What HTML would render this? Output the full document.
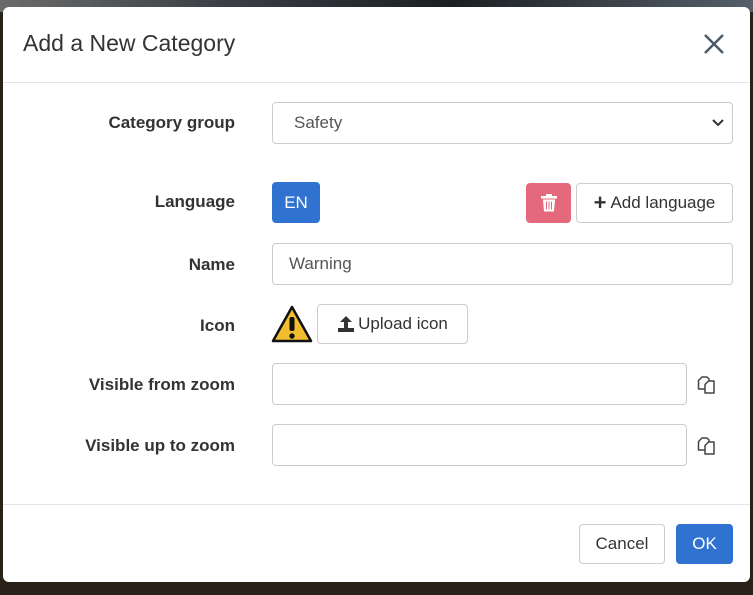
<!DOCTYPE html><html><head><style>
body{margin:0;width:753px;height:595px;background:#2a2118;position:relative;overflow:hidden;font-family:"Liberation Sans",sans-serif;}
.bg{position:absolute;left:0;top:0;width:753px;height:12px;background:linear-gradient(90deg,#6b6b6b,#3a3f44 30%,#1b1f22 60%,#56606a)}
.dlg{position:absolute;left:3px;top:7px;width:747px;height:575px;background:#fff;border-radius:6px}
.a{position:absolute;box-sizing:border-box}
.lbl{position:absolute;right:518px;font-weight:bold;font-size:17px;color:#333}
.in{border:1px solid #ccc;border-radius:4px;background:#fff;font-size:17px;color:#555;padding-left:16px;display:flex;align-items:center}
.btn{border:1px solid #ccc;border-radius:4px;background:#fff;font-size:17px;color:#333;display:flex;align-items:center;justify-content:center}
</style></head><body>
<div class="bg"></div>
<div class="dlg"></div>
<div class="a" style="left:23px;top:30px;font-size:23px;color:#333">Add a New Category</div>
<svg class="a" style="left:703px;top:33px" width="22" height="22"><path d="M2 2L20 20M20 2L2 20" stroke="#4a5a6c" stroke-width="2.5"/></svg>
<div class="a" style="left:3px;top:82px;width:747px;height:1px;background:#e5e5e5"></div>
<div class="lbl" style="top:113px">Category group</div>
<div class="a in" style="left:272px;top:102px;width:461px;height:42px;padding-left:21px">Safety
<svg style="position:absolute;right:8px;top:16px" width="12" height="9"><path d="M1 1L6 6L11 1" stroke="#333" stroke-width="2" fill="none"/></svg></div>
<div class="lbl" style="top:192px">Language</div>
<div class="a btn" style="left:272px;top:182px;width:48px;height:41px;background:#2f72d0;border-color:#2f72d0;color:#fff">EN</div>
<div class="a btn" style="left:526px;top:183px;width:45px;height:40px;background:#e5697c;border-color:#e5697c">
<svg width="16" height="18"><rect x="0" y="2" width="16" height="2.5" fill="#fff"/><rect x="5" y="0" width="6" height="3" fill="#fff"/><path d="M2 5.5h12l-1 12h-10z" fill="#fff"/><path d="M5.5 7.5v8M8 7.5v8M10.5 7.5v8" stroke="#e5697c" stroke-width="1"/></svg></div>
<div class="a btn" style="left:576px;top:183px;width:157px;height:40px"><span style="font-weight:bold;font-size:22px;margin-right:4px;line-height:1">+</span>Add language</div>
<div class="lbl" style="top:255px">Name</div>
<div class="a in" style="left:272px;top:243px;width:461px;height:42px">Warning</div>
<div class="lbl" style="top:316px">Icon</div>
<svg class="a" style="left:271px;top:305px" width="42" height="38"><path d="M21 2L40 36H2Z" fill="#f2bd2f" stroke="#111" stroke-width="2.5" stroke-linejoin="round"/><rect x="18.5" y="12" width="5" height="14" rx="2" fill="#111"/><circle cx="21" cy="31" r="2.7" fill="#111"/></svg>
<div class="a btn" style="left:317px;top:304px;width:151px;height:40px"><svg width="18" height="18" style="margin-right:3px"><path d="M9 1L3 7h4v6h4V7h4z" fill="#333"/><rect x="1" y="13" width="16" height="4" fill="#333"/></svg>Upload icon</div>
<div class="lbl" style="top:375px">Visible from zoom</div>
<div class="a in" style="left:272px;top:363px;width:415px;height:42px"></div>
<div class="lbl" style="top:436px">Visible up to zoom</div>
<div class="a in" style="left:272px;top:424px;width:415px;height:42px"></div>
<svg class="a" style="left:697px;top:375px" width="21" height="20"><path d="M1.5 5.5L5 2h5l2 2v10H1.5z" fill="#fff" stroke="#444" stroke-width="1.5" stroke-linejoin="round"/><path d="M8 9.5L11.5 6H17v12H8z" fill="#fff" stroke="#444" stroke-width="1.5" stroke-linejoin="round"/></svg>
<svg class="a" style="left:697px;top:436px" width="21" height="20"><path d="M1.5 5.5L5 2h5l2 2v10H1.5z" fill="#fff" stroke="#444" stroke-width="1.5" stroke-linejoin="round"/><path d="M8 9.5L11.5 6H17v12H8z" fill="#fff" stroke="#444" stroke-width="1.5" stroke-linejoin="round"/></svg>
<div class="a" style="left:3px;top:504px;width:747px;height:1px;background:#e5e5e5"></div>
<div class="a btn" style="left:579px;top:524px;width:86px;height:40px">Cancel</div>
<div class="a btn" style="left:676px;top:524px;width:57px;height:40px;background:#2f72d0;border-color:#2f72d0;color:#fff">OK</div>
</body></html>
